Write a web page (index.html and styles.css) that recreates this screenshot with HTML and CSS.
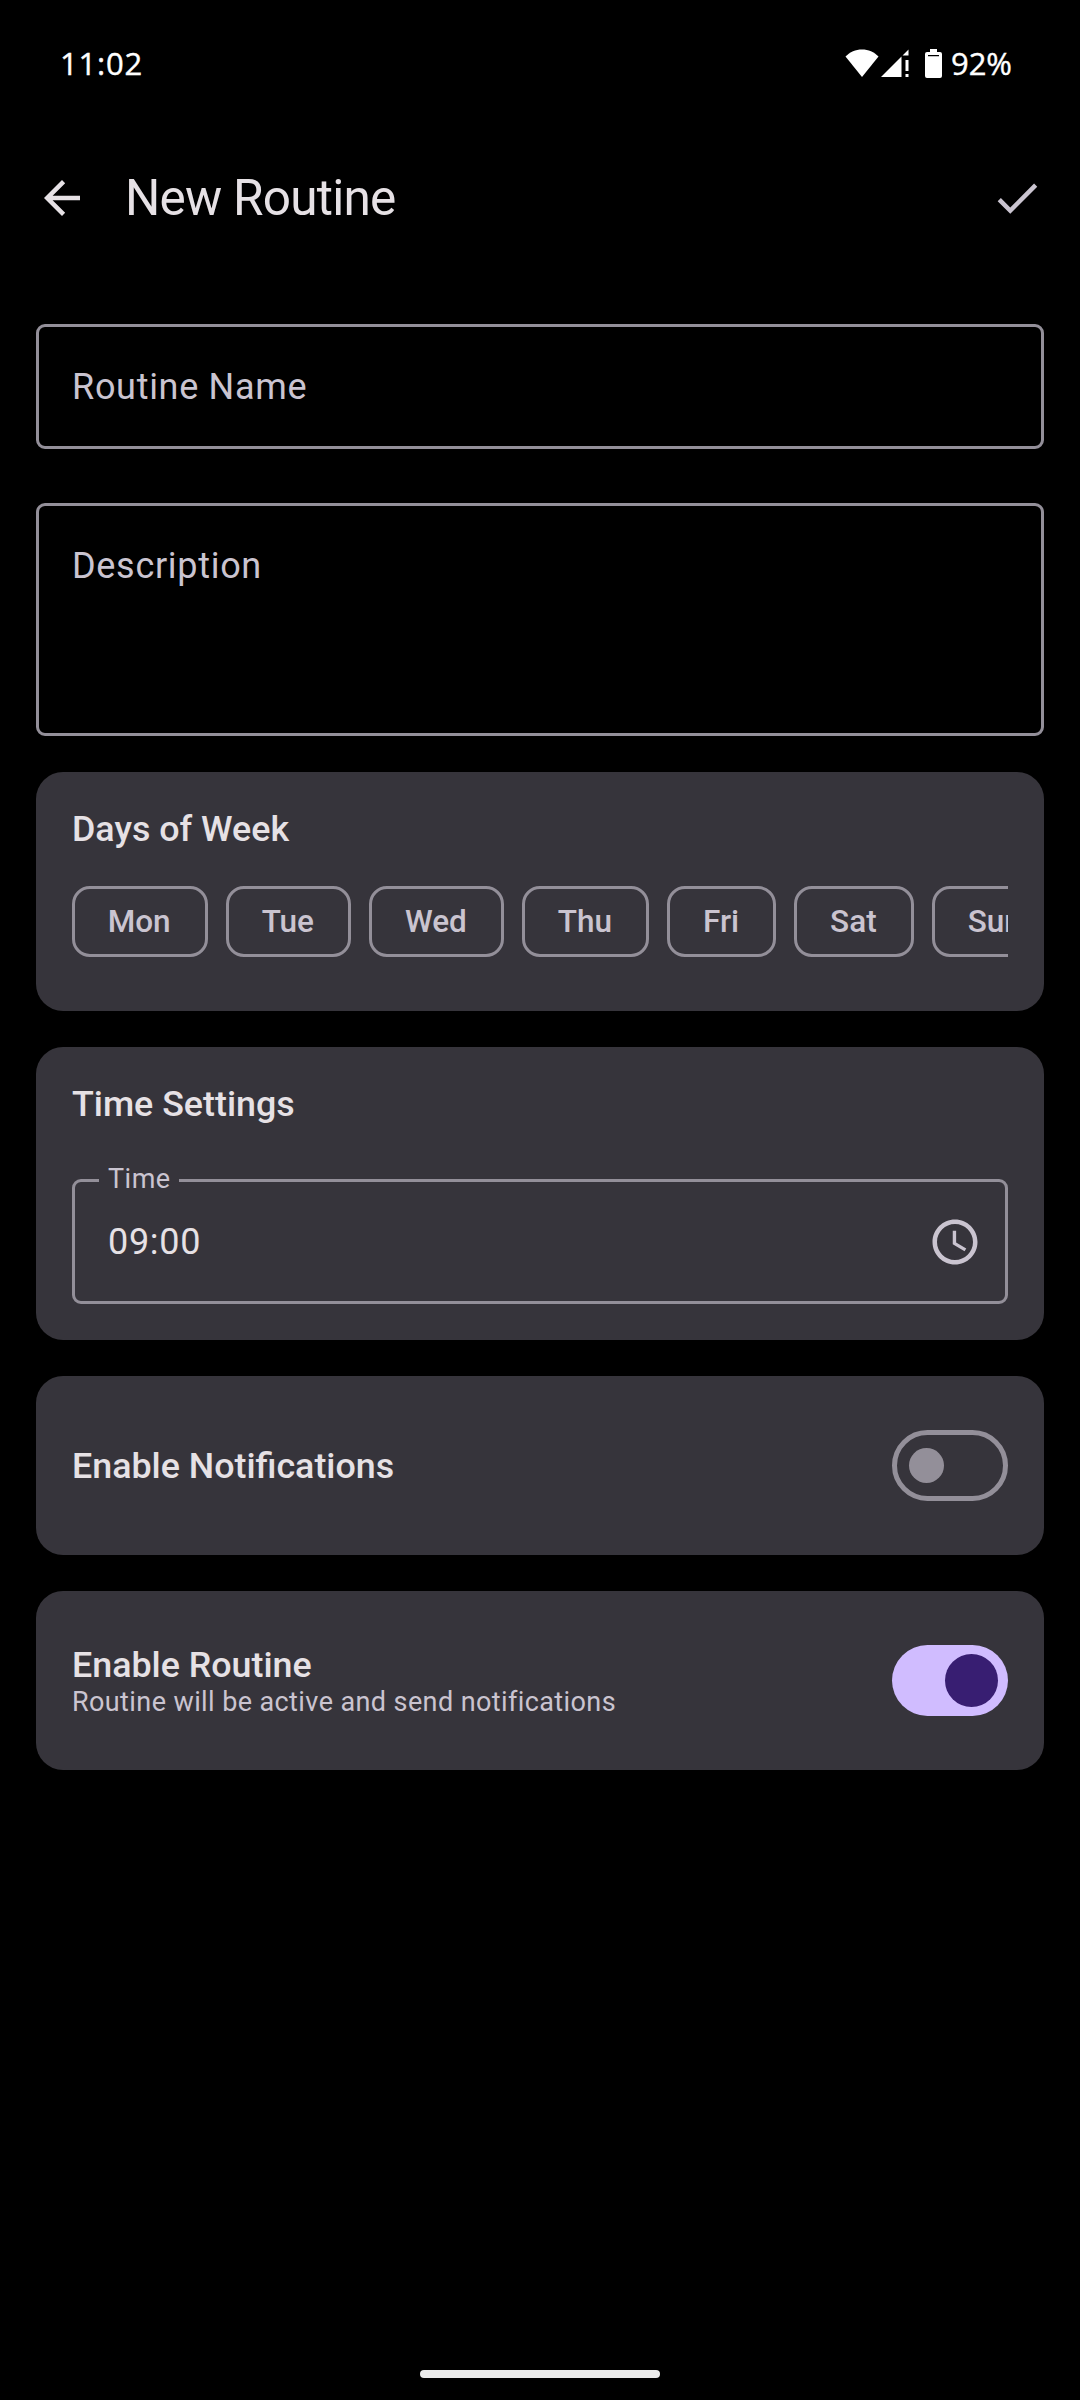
FILE: index.html
```html
<!DOCTYPE html>
<html lang="en">
<head>
<meta charset="utf-8">
<title>New Routine</title>
<link rel="stylesheet" href="styles.css">
</head>
<body>
<div class="screen">
  <div class="status">
    <span class="clock">11:02</span>
    <div class="status-icons">
      <svg class="wifi" width="34" height="28" viewBox="0 0 34 28"><path d="M17 28 0.5 7.5C5 3 10.500 0.500 17 0.500S29 3 33.500 7.500Z"/></svg>
      <svg class="signal" width="28" height="28" viewBox="0 0 28 28"><path d="M0 28 20.500 7.500V28ZM21.500 6.500 27.500 0.500V6.500ZM24.500 11H27.500V22H24.500ZM24.500 25H27.500V28H24.500Z"/></svg>
      <svg class="battery" width="17" height="29" viewBox="0 0 17 29"><path fill-rule="evenodd" d="M5 0H12V3H15Q17 3 17 5V27Q17 29 15 29H2Q0 29 0 27V5Q0 3 2 3H5ZM3 6V7.200H14V6Z"/></svg>
      <span class="percent">92%</span>
    </div>
  </div>

  <header class="appbar">
    <svg class="icon back" viewBox="0 0 24 24"><path d="M20 11H7.830l5.590-5.590L12 4l-8 8 8 8 1.410-1.410L7.830 13H20v-2z"/></svg>
    <h1 class="title">New Routine</h1>
    <svg class="icon" viewBox="0 0 24 24"><path d="M9 16.170 4.830 12l-1.420 1.410L9 19 21 7l-1.410-1.410z"/></svg>
  </header>

  <main class="form">
    <div class="field name">Routine Name</div>
    <div class="field description">Description</div>

    <section class="card days">
      <h2 class="heading">Days of Week</h2>
      <div class="chips">
        <span class="chip">Mon</span>
        <span class="chip">Tue</span>
        <span class="chip">Wed</span>
        <span class="chip">Thu</span>
        <span class="chip">Fri</span>
        <span class="chip">Sat</span>
        <span class="chip">Sun</span>
      </div>
    </section>

    <section class="card time">
      <h2 class="heading">Time Settings</h2>
      <div class="field time-field">
        <span class="label">Time</span>
        <span class="value">09:00</span>
        <svg class="icon" viewBox="0 0 24 24"><path d="M11.990 2C6.470 2 2 6.480 2 12s4.470 10 9.990 10C17.520 22 22 17.520 22 12S17.520 2 11.990 2zM12 20c-4.420 0-8-3.580-8-8s3.580-8 8-8 8 3.580 8 8-3.580 8-8 8z"/><path d="M12.500 7H11v6l5.250 3.150.75-1.230-4.500-2.670z"/></svg>
      </div>
    </section>

    <section class="card row">
      <h2 class="heading">Enable Notifications</h2>
      <div class="switch"><div class="thumb"></div></div>
    </section>

    <section class="card row">
      <div class="texts">
        <h2 class="heading">Enable Routine</h2>
        <p class="sub">Routine will be active and send notifications</p>
      </div>
      <div class="switch on"><div class="thumb"></div></div>
    </section>
  </main>

  <div class="home"></div>
</div>
</body>
</html>
```
FILE: styles.css
```css
* { box-sizing: border-box; margin: 0; }

body {
  background: #000;
  color: #e6e1e5;
  font-family: Roboto, "Liberation Sans", sans-serif;
}

.screen {
  width: 1080px;
  height: 2400px;
  display: flex;
  flex-direction: column;
  overflow: hidden;
}

.status {
  height: 126px;
  padding: 0 68px 0 60px;
  display: flex;
  justify-content: space-between;
  align-items: center;
  color: #fff;
  font: 500 31px/40px "Open Sans", "Noto Sans", sans-serif;
  -webkit-text-stroke: 0.4px #fff;
}
.status svg { fill: #fff; stroke: none; }
.status-icons { display: flex; align-items: center; }
.clock { letter-spacing: 0.8px; }
.signal { margin-left: 2px; }
.battery { margin-left: 16px; }
.percent { margin-left: 9px; }

.appbar {
  height: 144px;
  padding: 0 36px 0 35px;
  display: flex;
  align-items: center;
}
.icon { width: 54px; height: 54px; flex: none; fill: #cac4d0; }
.back { fill: #e6e1e5; }
.title {
  flex: 1;
  margin-left: 36px;
  font-size: 49.5px;
  line-height: 63px;
  font-weight: 400;
  letter-spacing: -0.75px;
}

.form {
  flex: 1;
  padding: 54px 36px 0;
  display: flex;
  flex-direction: column;
}

.field {
  border: 3px solid #938f99;
  border-radius: 9px;
  padding: 33px;
  font-size: 36px;
  line-height: 54px;
  letter-spacing: 0.7px;
  color: #cac4d0;
}
.name { height: 125px; }
.description { height: 233px; margin-top: 54px; }

.card {
  margin-top: 36px;
  padding: 36px;
  border-radius: 27px;
  background: #36343b;
}
.heading { font-size: 35.8px; line-height: 42px; font-weight: 500; }

.days { height: 239px; }
.chips { display: flex; gap: 18px; margin-top: 36px; overflow: hidden; }
.chip {
  flex: none;
  height: 71px;
  padding: 0 34.3px 0 32.7px;
  border: 3px solid #938f99;
  border-radius: 18px;
  font-size: 31.5px;
  line-height: 65px;
  font-weight: 500;
  color: #cac4d0;
}

.time { height: 293px; }
.time-field {
  position: relative;
  height: 125px;
  margin-top: 54px;
  padding: 0 23px 0 33px;
  display: flex;
  justify-content: space-between;
  align-items: center;
}
.label {
  position: absolute;
  left: 24px;
  top: -21px;
  padding: 0 8px 0 9px;
  background: #36343b;
  font-size: 27px;
  line-height: 36px;
  letter-spacing: 0.5px;
}
.value { color: #e6e1e5; }

.row {
  height: 179px;
  display: flex;
  justify-content: space-between;
  align-items: center;
}
.sub {
  font-size: 27px;
  line-height: 32px;
  letter-spacing: 0.4px;
  color: #cac4d0;
}
.switch {
  width: 116px;
  height: 71px;
  padding-left: 12px;
  border: 5px solid #938f99;
  border-radius: 36px;
  display: flex;
  align-items: center;
}
.thumb { width: 35px; height: 35px; border-radius: 50%; background: #938f99; }
.on {
  padding: 0 10px 0 0;
  border: 0;
  background: #d0bcff;
  justify-content: flex-end;
}
.on .thumb { width: 53px; height: 53px; background: #381e72; }

.home {
  width: 240px;
  height: 8px;
  margin: 0 auto 22px;
  border-radius: 4px;
  background: #ebebeb;
}
```
